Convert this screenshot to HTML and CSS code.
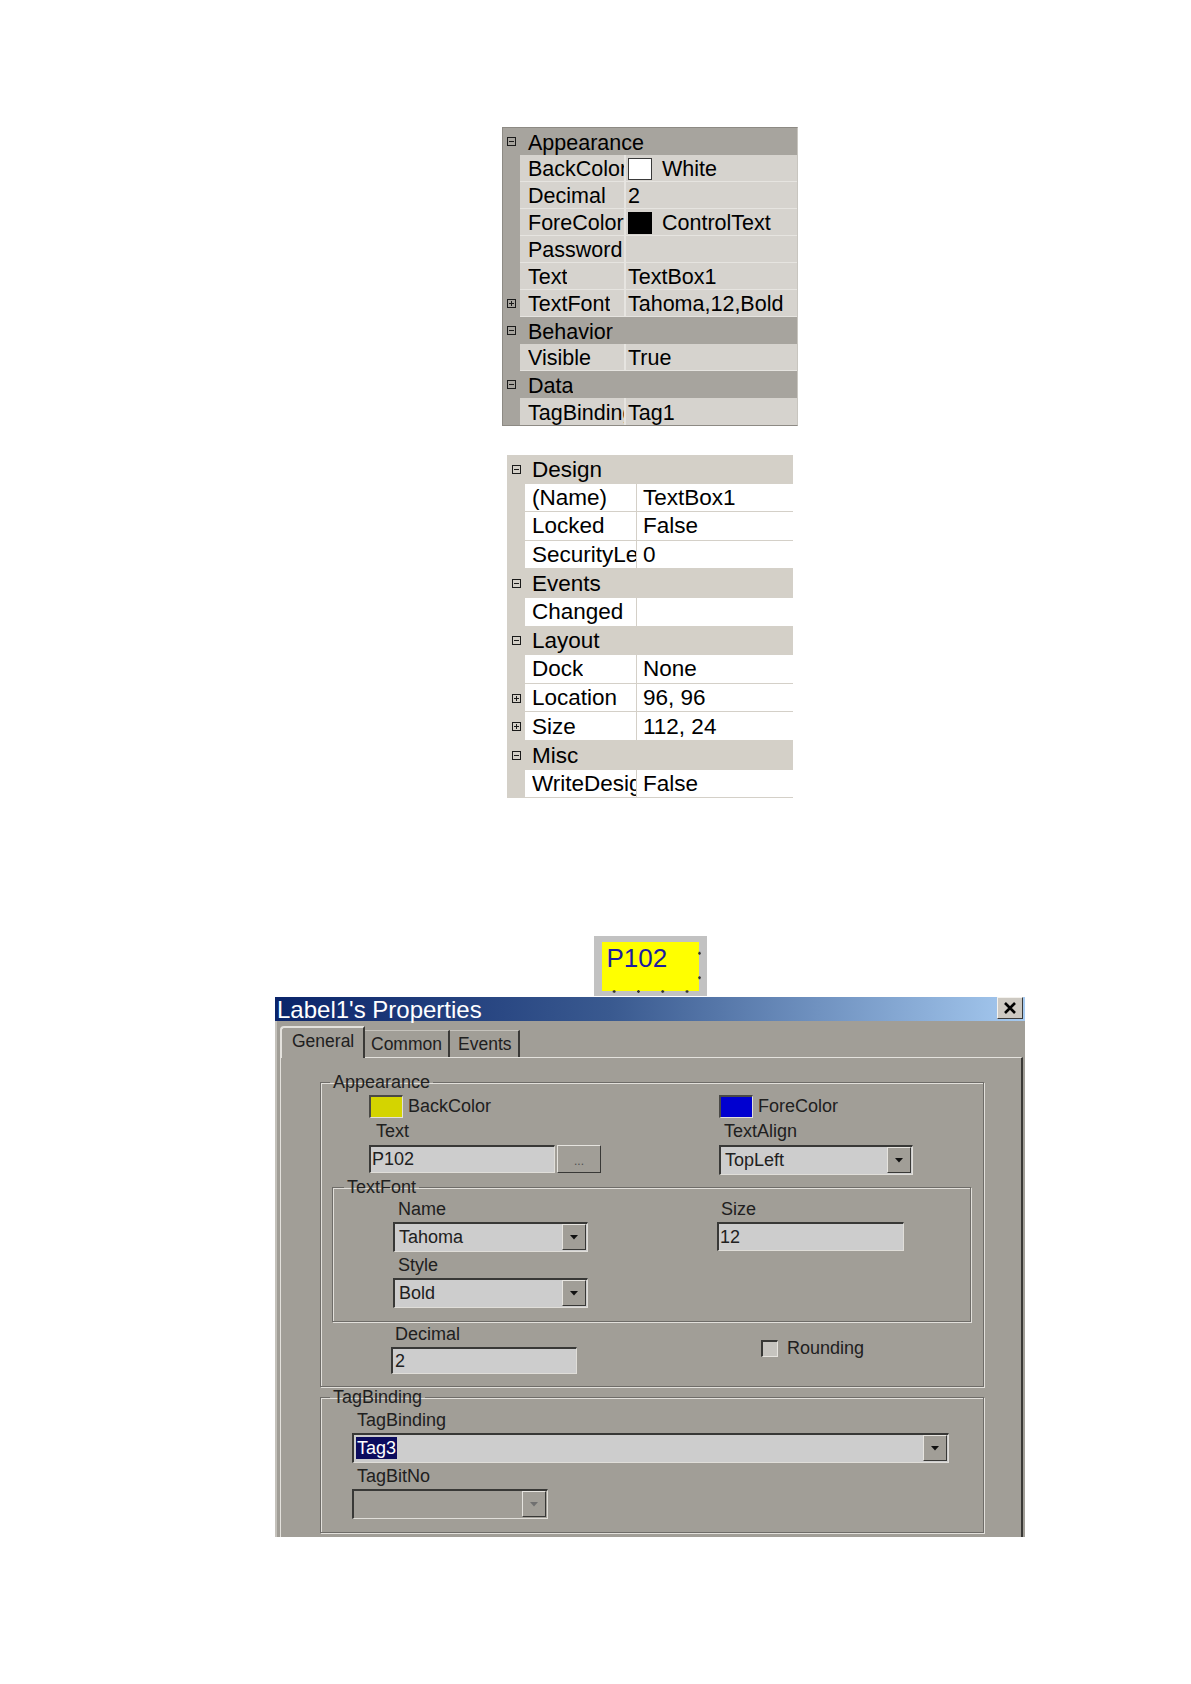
FILE: index.html
```html
<!DOCTYPE html>
<html>
<head>
<meta charset="utf-8">
<title>Properties</title>
<link rel="stylesheet" href="styles.css">
</head>
<body>
<div class="page">

  <div class="pg pg1">
    <div class="row cat"><span class="gut"><svg class="exp" viewBox="0 0 9 9"><rect x="0.5" y="0.5" width="8" height="8"/><path d="M2 4.5h5"/></svg></span><span class="catname">Appearance</span></div>
    <div class="row item"><span class="gut"></span><span class="name"><span class="nt">BackColor</span></span><span class="val"><span class="sw sw-white"></span>White</span></div>
    <div class="row item"><span class="gut"></span><span class="name"><span class="nt">Decimal</span></span><span class="val">2</span></div>
    <div class="row item"><span class="gut"></span><span class="name"><span class="nt">ForeColor</span></span><span class="val"><span class="sw sw-black"></span>ControlText</span></div>
    <div class="row item"><span class="gut"></span><span class="name"><span class="nt">Password</span></span><span class="val"></span></div>
    <div class="row item"><span class="gut"></span><span class="name"><span class="nt">Text</span></span><span class="val">TextBox1</span></div>
    <div class="row item"><span class="gut"><svg class="exp" viewBox="0 0 9 9"><rect x="0.5" y="0.5" width="8" height="8"/><path d="M2 4.5h5M4.5 2v5"/></svg></span><span class="name"><span class="nt">TextFont</span></span><span class="val">Tahoma,12,Bold</span></div>
    <div class="row cat"><span class="gut"><svg class="exp" viewBox="0 0 9 9"><rect x="0.5" y="0.5" width="8" height="8"/><path d="M2 4.5h5"/></svg></span><span class="catname">Behavior</span></div>
    <div class="row item"><span class="gut"></span><span class="name"><span class="nt">Visible</span></span><span class="val">True</span></div>
    <div class="row cat"><span class="gut"><svg class="exp" viewBox="0 0 9 9"><rect x="0.5" y="0.5" width="8" height="8"/><path d="M2 4.5h5"/></svg></span><span class="catname">Data</span></div>
    <div class="row item last"><span class="gut"></span><span class="name"><span class="nt">TagBinding</span></span><span class="val">Tag1</span></div>
  </div>

  <div class="pg pg2">
    <div class="row cat"><span class="gut"><svg class="exp" viewBox="0 0 9 9"><rect x="0.5" y="0.5" width="8" height="8"/><path d="M2 4.5h5"/></svg></span><span class="catname">Design</span></div>
    <div class="row item"><span class="gut"></span><span class="name"><span class="nt">(Name)</span></span><span class="val">TextBox1</span></div>
    <div class="row item"><span class="gut"></span><span class="name"><span class="nt">Locked</span></span><span class="val">False</span></div>
    <div class="row item"><span class="gut"></span><span class="name"><span class="nt">SecurityLevel</span></span><span class="val">0</span></div>
    <div class="row cat"><span class="gut"><svg class="exp" viewBox="0 0 9 9"><rect x="0.5" y="0.5" width="8" height="8"/><path d="M2 4.5h5"/></svg></span><span class="catname">Events</span></div>
    <div class="row item"><span class="gut"></span><span class="name"><span class="nt">Changed</span></span><span class="val"></span></div>
    <div class="row cat"><span class="gut"><svg class="exp" viewBox="0 0 9 9"><rect x="0.5" y="0.5" width="8" height="8"/><path d="M2 4.5h5"/></svg></span><span class="catname">Layout</span></div>
    <div class="row item"><span class="gut"></span><span class="name"><span class="nt">Dock</span></span><span class="val">None</span></div>
    <div class="row item"><span class="gut"><svg class="exp" viewBox="0 0 9 9"><rect x="0.5" y="0.5" width="8" height="8"/><path d="M2 4.5h5M4.5 2v5"/></svg></span><span class="name"><span class="nt">Location</span></span><span class="val">96, 96</span></div>
    <div class="row item"><span class="gut"><svg class="exp" viewBox="0 0 9 9"><rect x="0.5" y="0.5" width="8" height="8"/><path d="M2 4.5h5M4.5 2v5"/></svg></span><span class="name"><span class="nt">Size</span></span><span class="val">112, 24</span></div>
    <div class="row cat"><span class="gut"><svg class="exp" viewBox="0 0 9 9"><rect x="0.5" y="0.5" width="8" height="8"/><path d="M2 4.5h5"/></svg></span><span class="catname">Misc</span></div>
    <div class="row item"><span class="gut"></span><span class="name"><span class="nt">WriteDesign</span></span><span class="val">False</span></div>
  </div>

  <div class="lbl"><div class="lbl-in">P102</div></div>

  <div class="dlg">
    <div class="tbar">
      <span class="ttl">Label1's Properties</span>
      <span class="xbtn"><svg width="14" height="12" viewBox="0 0 14 12"><path d="M2 1L12 11M12 1L2 11"/></svg></span>
    </div>
    <div class="dbody">
      <div class="tabs">
        <span class="tab sel t-gen">General</span>
        <span class="tab t-com">Common</span>
        <span class="tab t-evt">Events</span>
      </div>
      <div class="panel">
        <fieldset class="grp g-app">
          <legend>Appearance</legend>
          <div class="ap-grid">
            <div class="col">
              <div class="swrow"><span class="csw csw-y"></span><span>BackColor</span></div>
              <div class="flabel">Text</div>
              <div class="inrow">
                <div class="inp w-text">P102</div>
                <div class="dots">...</div>
              </div>
            </div>
            <div class="col">
              <div class="swrow"><span class="csw csw-b"></span><span>ForeColor</span></div>
              <div class="flabel fl-r">TextAlign</div>
              <div class="inrow">
                <div class="inp combo w-align"><span class="ctext">TopLeft</span><span class="dd"><svg width="8" height="5" viewBox="0 0 8 5"><path d="M0 0h8L4 4.5z"/></svg></span></div>
              </div>
            </div>
          </div>

          <fieldset class="grp g-font">
            <legend>TextFont</legend>
            <div class="tf-grid">
              <div class="col">
                <div class="flabel fl-5">Name</div>
                <div class="inp combo w-name"><span class="ctext">Tahoma</span><span class="dd"><svg width="8" height="5" viewBox="0 0 8 5"><path d="M0 0h8L4 4.5z"/></svg></span></div>
                <div class="flabel fl-5">Style</div>
                <div class="inp combo w-name"><span class="ctext">Bold</span><span class="dd"><svg width="8" height="5" viewBox="0 0 8 5"><path d="M0 0h8L4 4.5z"/></svg></span></div>
              </div>
              <div class="col">
                <div class="flabel fl-4">Size</div>
                <div class="inp w-size">12</div>
              </div>
            </div>
          </fieldset>

          <div class="dec-grid">
            <div class="col">
              <div class="flabel fl-4">Decimal</div>
              <div class="inp w-dec">2</div>
            </div>
            <div class="chkrow"><span class="chk"></span><span>Rounding</span></div>
          </div>
        </fieldset>

        <fieldset class="grp g-tag">
          <legend>TagBinding</legend>
          <div class="tag-col">
            <div class="flabel fl-5">TagBinding</div>
            <div class="inp combo w-tag"><span class="ctext"><span class="hl">Tag3</span></span><span class="dd"><svg width="8" height="5" viewBox="0 0 8 5"><path d="M0 0h8L4 4.5z"/></svg></span></div>
            <div class="flabel fl-5">TagBitNo</div>
            <div class="inp combo w-bit disabled"><span class="ctext"></span><span class="dd"><svg width="8" height="5" viewBox="0 0 8 5"><path d="M0 0h8L4 4.5z"/></svg></span></div>
          </div>
        </fieldset>
      </div>
    </div>
  </div>

</div>
</body>
</html>
```

FILE: styles.css
```css
html, body {
  margin: 0;
  padding: 0;
  background: #ffffff;
}

body {
  font-family: "Liberation Sans", Arial, sans-serif;
  color: #000;
}

.page {
  width: 750px;
  margin-left: 275px;
  padding-top: 127px;
  display: flex;
  flex-direction: column;
  align-items: center;
}

/* ---------- property grids ---------- */
.pg {
  display: flex;
  flex-direction: column;
}

.row {
  display: flex;
  align-items: stretch;
  box-sizing: border-box;
  white-space: nowrap;
}

.gut {
  flex: none;
  display: flex;
  align-items: center;
  justify-content: center;
}

.exp {
  width: 9px;
  height: 9px;
  fill: none;
  stroke: #1a1a1a;
  stroke-width: 1;
}

.name, .val, .catname {
  display: flex;
  align-items: center;
  overflow: hidden;
  box-sizing: border-box;
}

.nt {
  display: block;
  overflow: hidden;
  white-space: nowrap;
  text-overflow: clip;
  max-width: 100%;
}

.val { flex: 1; }

/* grid 1 (gray) */
.pg1 {
  width: 296px;
  border: 1px solid #8d8a84;
  border-right-color: #c8c5bf;
  box-sizing: border-box;
  font-size: 21.5px;
}
.pg1 .row { height: 27px; }
.pg1 .gut { width: 17px; background: #a7a49e; }
.pg1 .cat { background: #a7a49e; }
.pg1 .catname { padding: 3px 0 0 8px; }
.pg1 .name {
  width: 106px;
  padding: 3px 0 0 8px;
  background: #d6d3ce;
  border-right: 2px solid #e6e4e0;
  border-bottom: 1px solid #e6e4e0;
}
.pg1 .val {
  padding: 3px 0 0 2px;
  background: #d6d3ce;
  border-bottom: 1px solid #e6e4e0;
}
.pg1 .last .name, .pg1 .last .val { border-bottom: none; }

.sw {
  width: 24px;
  height: 22px;
  box-sizing: border-box;
  margin: -2px 10px 0 0;
  flex: none;
}
.sw-white { background: #fff; border: 1px solid #3a3a3a; }
.sw-black { background: #000; }

/* grid 2 (white) */
.pg2 {
  width: 286px;
  margin-top: 29px;
  font-size: 22.5px;
}
.pg2 .row { height: 28.6px; }
.pg2 .gut { width: 18px; background: #d4d0c8; }
.pg2 .cat { background: #d4d0c8; }
.pg2 .catname { padding: 1px 0 0 7px; }
.pg2 .name {
  width: 112px;
  padding: 1px 0 0 7px;
  background: #fff;
  border-right: 1px solid #d4d0c8;
  border-bottom: 1px solid #d4d0c8;
}
.pg2 .val {
  padding: 1px 0 0 6px;
  background: #fff;
  border-bottom: 1px solid #d4d0c8;
}

/* ---------- label P102 ---------- */
.lbl {
  width: 113px;
  height: 60px;
  box-sizing: border-box;
  margin-top: 138px;
  padding: 6px 8px 5px 8px;
  background: #c2c2c2;
}
.lbl-in {
  position: relative;
  height: 100%;
  box-sizing: border-box;
  background: #ffff00;
  color: #1c1ca2;
  font-size: 26px;
  line-height: 26px;
  padding: 3px 0 0 5px;
}
.lbl-in::after {
  content: "";
  position: absolute;
  left: 0;
  right: -2px;
  bottom: -2px;
  height: 3px;
  background: radial-gradient(circle, #333 1px, transparent 1.6px) 0 0 / 24.3px 3px repeat-x;
}
.lbl-in::before {
  content: "";
  position: absolute;
  top: -1px;
  right: -2px;
  width: 3px;
  height: 51px;
  background: radial-gradient(circle, #333 1px, transparent 1.6px) 0 0 / 3px 24.5px repeat-y;
}

/* ---------- dialog ---------- */
.dlg {
  width: 750px;
  margin-top: 1px;
  background: #a19e97;
  font-size: 18px;
  color: #202020;
}

.tbar {
  height: 24px;
  display: flex;
  align-items: flex-start;
  justify-content: space-between;
  padding: 0 2px 0 2px;
  background: linear-gradient(to right, #0a246a 0%, #3a5a90 45%, #a6caf0 100%);
}
.ttl {
  color: #fff;
  font-size: 24px;
  line-height: 24px;
  padding-top: 1px;
}
.xbtn {
  width: 26px;
  height: 22px;
  box-sizing: border-box;
  margin-top: 0;
  background: #cdc9c2;
  border: 1px solid;
  border-color: #f4f2ee #3a3a3a #3a3a3a #f4f2ee;
  display: flex;
  align-items: center;
  justify-content: center;
}
.xbtn svg {
  stroke: #000;
  stroke-width: 2.6;
  fill: none;
}

.dbody {
  padding: 5px 2px 0 5px;
  box-shadow: inset 2px 0 0 #c4c1bb;
}

.tabs {
  display: flex;
  align-items: flex-end;
  height: 31px;
  font-size: 17.5px;
}
.tab {
  box-sizing: border-box;
  height: 27px;
  display: flex;
  align-items: center;
  border-top: 1px solid #c6c3bd;
  border-right: 2px solid #3a3936;
}
.tab.sel {
  position: relative;
  z-index: 1;
  height: 32px;
  margin-bottom: -1px;
  background: #a19e97;
  border-top: 2px solid #e4e2dd;
  border-left: 2px solid #e4e2dd;
  border-top-left-radius: 4px;
  padding-bottom: 3px;
}
.t-gen { width: 85px; padding-left: 10px; }
.t-com { width: 85px; padding-left: 6px; }
.t-evt { width: 70px; padding-left: 8px; }

.panel {
  box-sizing: border-box;
  height: 480px;
  border-top: 1px solid #e4e2dd;
  border-left: 1px solid #e4e2dd;
  border-right: 2px solid #3a3936;
  padding: 14px 37px 0 39px;
  overflow: hidden;
}

/* group boxes */
.grp {
  margin: 0;
  padding: 0;
  min-width: 0;
  border: 1px solid #6e6c68;
  box-shadow: inset 1px 1px 0 #e2e0db, 1px 1px 0 #e2e0db;
}
.grp > legend {
  padding: 0 3px;
  margin-left: 9px;
  line-height: 20px;
  font-size: 18px;
}
.g-font {
  margin: 2px 12px 0 11px;
}
.g-font > legend { margin-left: 11px; }

.ap-grid {
  display: grid;
  grid-template-columns: 350px 1fr;
  padding: 3px 0 0 48px;
}
.col {
  display: flex;
  flex-direction: column;
  align-items: flex-start;
}
.swrow {
  display: flex;
  align-items: center;
  gap: 5px;
  height: 23px;
}
.csw {
  width: 34px;
  height: 23px;
  box-sizing: border-box;
  border-style: solid;
  border-width: 2px 1px 1px 2px;
  border-color: #4a4946 #e2e0db #e2e0db #4a4946;
}
.csw-y { background: #d4d400; }
.csw-b { background: #0000d0; }

.flabel {
  line-height: 20px;
  margin-top: 3px;
  padding-left: 7px;
}
.col > .flabel:first-child,
.tag-col > .flabel:first-child { margin-top: 0; }
.fl-r { padding-left: 5px; }
.fl-5 { padding-left: 5px; }
.fl-4 { padding-left: 4px; }

.inrow {
  display: flex;
  gap: 2px;
  margin-top: 4px;
}

.inp {
  box-sizing: border-box;
  height: 28px;
  display: flex;
  align-items: center;
  background: #cdcdcd;
  border-style: solid;
  border-width: 2px 1px 1px 2px;
  border-color: #383836 #e0ded9 #e0ded9 #383836;
  padding-left: 1px;
  color: #202020;
  white-space: nowrap;
}
.combo {
  height: 30px;
  justify-content: space-between;
  padding-left: 4px;
}
.ctext { flex: 1; }
.dd {
  width: 24px;
  height: 26px;
  box-sizing: border-box;
  margin: 0 1px 1px 0;
  align-self: flex-end;
  background: #a19e97;
  border: 1px solid;
  border-color: #e6e4df #383836 #383836 #e6e4df;
  display: flex;
  align-items: center;
  justify-content: center;
}
.dd svg { fill: #111; }

.dots {
  width: 44px;
  height: 28px;
  box-sizing: border-box;
  background: #a19e97;
  border: 1px solid;
  border-color: #e6e4df #383836 #383836 #e6e4df;
  display: flex;
  align-items: flex-end;
  justify-content: center;
  font-size: 12px;
  color: #505050;
  padding-bottom: 4px;
}

.w-text { width: 186px; }
.w-align { width: 194px; }
.w-name { width: 195px; margin-top: 3px; }
.w-size { width: 187px; height: 29px; margin-top: 3px; }
.w-dec { width: 186px; height: 27px; margin-top: 3px; padding-left: 2px; }
.w-tag { width: 597px; margin-top: 3px; padding-left: 2px; }
.w-bit { width: 196px; margin-top: 3px; }

.tf-grid {
  display: grid;
  grid-template-columns: 324px 1fr;
  padding: 2px 0 13px 60px;
}

.dec-grid {
  display: grid;
  grid-template-columns: 370px 1fr;
  align-items: center;
  padding: 2px 0 12px 70px;
}
.chkrow {
  display: flex;
  align-items: center;
  gap: 9px;
  margin-top: -2px;
}
.chk {
  width: 17px;
  height: 17px;
  box-sizing: border-box;
  background: #c6c4bf;
  border-style: solid;
  border-width: 2px 1px 1px 2px;
  border-color: #383836 #e6e4df #e6e4df #383836;
}

.tag-col {
  display: flex;
  flex-direction: column;
  align-items: flex-start;
  padding: 3px 0 13px 31px;
}
.hl {
  background: #0c0c5e;
  color: #fff;
  padding: 1px 1px;
}
.disabled {
  background: #a19e97;
}
.disabled .dd svg { fill: #707070; }
```
